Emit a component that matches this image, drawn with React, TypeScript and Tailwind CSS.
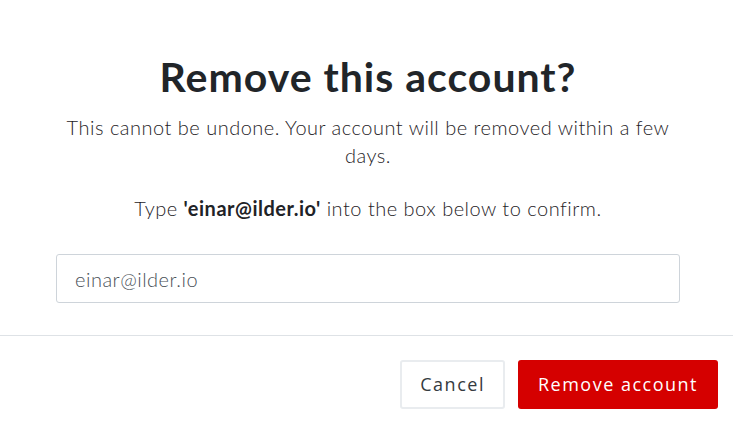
const App = (): JSX.Element => {
  const email = "einar@ilder.io";

  return (
    <div className="min-h-screen w-full bg-white font-['Lato',sans-serif] text-[#212529]">
      <div className="flex flex-col items-center pl-[56px] pr-[53px] pt-[53px] pb-[32px] text-center">
        <h1 className="text-[41px] leading-[48px] font-bold tracking-[1px]">
          Remove this account?
        </h1>
        <p className="mt-[12px] text-[20px] leading-[28px] font-light tracking-[0.5px] text-[#1f2327]">
          This cannot be undone. Your account will be removed within a few days.
        </p>
        <p className="mt-[25px] text-[20px] leading-[28px] font-light tracking-[0.5px] text-[#1f2327]">
          Type <strong className="font-bold">'{email}'</strong> into the box below to confirm.
        </p>
        <input
          type="text"
          defaultValue={email}
          className="mt-[32px] h-[49px] w-full rounded-[3px] border border-[#ced4da] px-[18px] text-[20px] font-light tracking-[0.5px] text-[#495057] outline-none"
        />
      </div>
      <div className="flex justify-end gap-[13px] border-t border-[#dee2e6] px-[15px] pt-[24px] pb-[19px] font-['Open_Sans',sans-serif]">
        <button className="h-[49px] rounded-[3px] border-2 border-[#e9ecef] bg-white px-[18px] text-[18px] tracking-[1.5px] text-[#343a40]">
          Cancel
        </button>
        <button className="h-[49px] rounded-[3px] bg-[#d50000] px-[20px] text-[18px] tracking-[1.5px] text-white">
          Remove account
        </button>
      </div>
    </div>
  );
};

export default App;
